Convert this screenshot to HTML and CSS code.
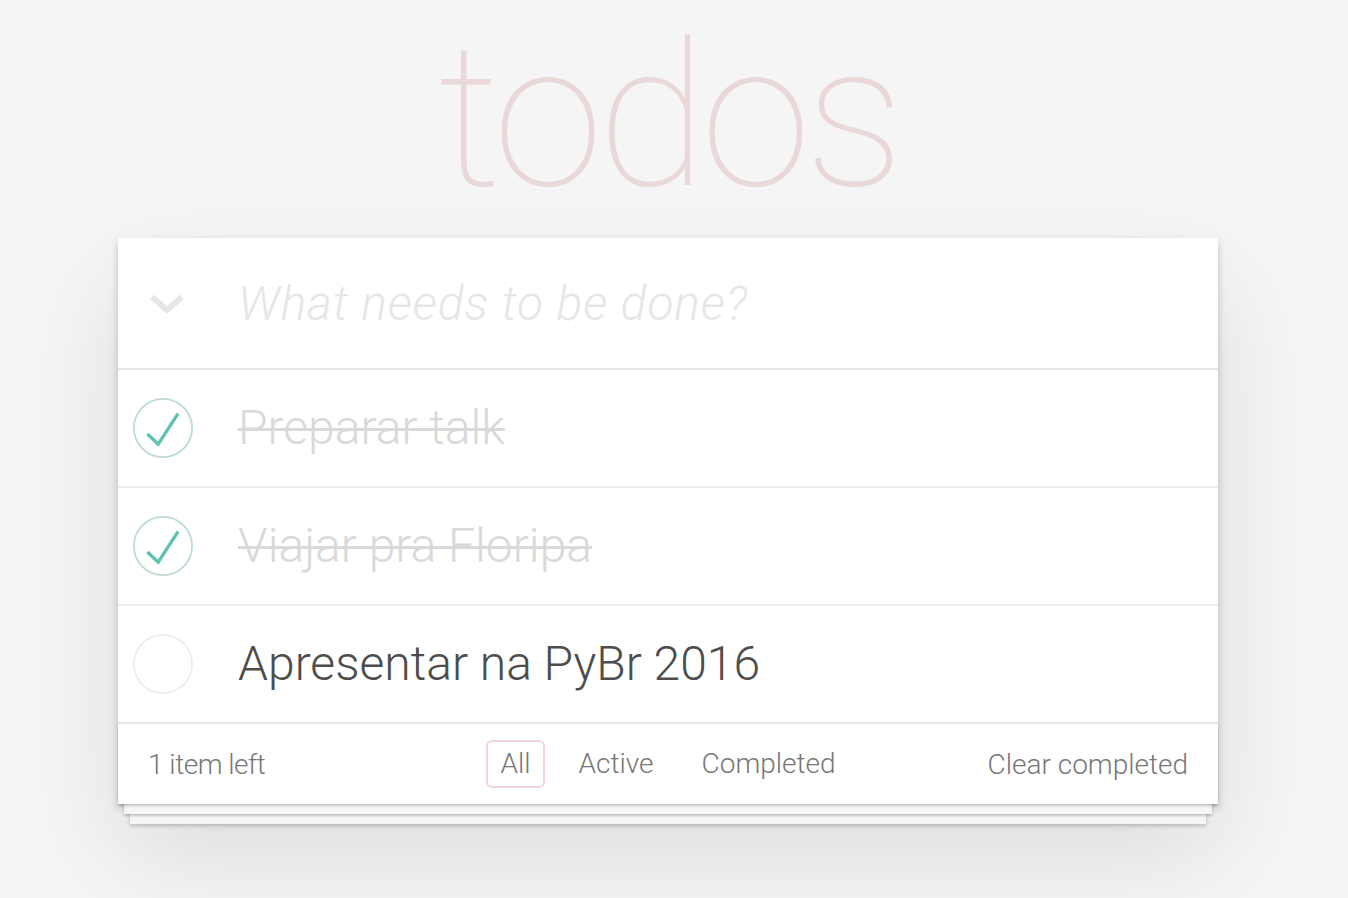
FILE: index.html
```html
<!DOCTYPE html>
<html lang="en">
<head>
<meta charset="utf-8">
<title>todos</title>
<link rel="stylesheet" href="styles.css">
</head>
<body>
<section class="todoapp">
  <h1 class="title">todos</h1>
  <div class="card">
    <header class="header">
      <span class="toggle-all">
        <svg width="34" height="22" viewBox="0 0 34 22"><polyline points="2,3 17,16 32,3" fill="none" stroke="#e6e6e6" stroke-width="6"/></svg>
      </span>
      <input class="new-todo" placeholder="What needs to be done?">
    </header>
    <ul class="todo-list">
      <li class="todo done">
        <span class="check">
          <svg width="60" height="60" viewBox="-50 -50 100 100"><circle r="48.5" fill="none" stroke="#bddad5" stroke-width="3"/><path d="M25 -24 L-8 27 L-26 10" fill="none" stroke="#5dc2af" stroke-width="5.5"/></svg>
        </span>
        <label class="label">Preparar talk</label>
      </li>
      <li class="todo done">
        <span class="check">
          <svg width="60" height="60" viewBox="-50 -50 100 100"><circle r="48.5" fill="none" stroke="#bddad5" stroke-width="3"/><path d="M25 -24 L-8 27 L-26 10" fill="none" stroke="#5dc2af" stroke-width="5.5"/></svg>
        </span>
        <label class="label">Viajar pra Floripa</label>
      </li>
      <li class="todo">
        <span class="check">
          <svg width="60" height="60" viewBox="-50 -50 100 100"><circle r="48.5" fill="none" stroke="#ededed" stroke-width="3"/></svg>
        </span>
        <label class="label">Apresentar na PyBr 2016</label>
      </li>
    </ul>
    <footer class="footer">
      <span class="count">1 item left</span>
      <ul class="filters">
        <li><a class="filter selected">All</a></li>
        <li><a class="filter">Active</a></li>
        <li><a class="filter">Completed</a></li>
      </ul>
      <span class="clear">Clear completed</span>
    </footer>
  </div>
</section>
</body>
</html>
```
FILE: styles.css
```css
html, body {
  margin: 0;
  padding: 0;
}
body {
  background: #f5f5f5;
  font-family: Roboto, "Liberation Sans", sans-serif;
  font-weight: 300;
  color: #4d4d4d;
  min-height: 898px;
  padding-right: 12px;
}
.todoapp {
  width: 1100px;
  margin: 0 auto;
}
.title {
  margin: 0;
  height: 238px;
  box-sizing: border-box;
  padding-top: 17px;
  font-size: 200px;
  line-height: 200px;
  font-weight: 100;
  letter-spacing: -6px;
  text-align: center;
  color: rgba(175, 47, 47, 0.15);
}
.card {
  background: #fff;
  position: relative;
  box-shadow: 0 4px 8px 0 rgba(0, 0, 0, 0.2), 0 50px 100px 0 rgba(0, 0, 0, 0.1);
}
.header {
  display: flex;
  align-items: center;
  height: 130px;
  border-bottom: 2px solid #e6e6e6;
}
.toggle-all {
  width: 120px;
  flex: none;
  display: flex;
  justify-content: flex-start;
  padding-left: 32px;
  box-sizing: border-box;
  margin-top: 4px;
}
.new-todo {
  flex: 1;
  border: none;
  outline: none;
  background: transparent;
  padding: 0;
  margin: 0;
  font-family: Roboto, "Liberation Sans", sans-serif;
  font-size: 48px;
  font-style: italic;
  font-weight: 300;
  letter-spacing: 0.9px;
  color: #4d4d4d;
}
.new-todo::placeholder {
  color: #e6e6e6;
  font-style: italic;
  font-weight: 300;
}
.todo-list {
  list-style: none;
  margin: 0;
  padding: 0;
}
.todo {
  display: flex;
  align-items: center;
  height: 116px;
  border-bottom: 2px solid #ededed;
}
.todo:last-child {
  border-bottom: none;
}
.check {
  width: 120px;
  flex: none;
  padding-left: 15px;
  box-sizing: border-box;
  display: flex;
  align-items: center;
}
.label {
  font-size: 48px;
  line-height: 1.2;
  color: #4d4d4d;
}
.done .label {
  color: #d9d9d9;
  text-decoration: line-through;
  text-decoration-thickness: 3px;
}
.footer {
  position: relative;
  height: 80px;
  border-top: 2px solid #e6e6e6;
  padding: 0 30px;
  display: grid;
  grid-template-columns: 1fr auto 1fr;
  align-items: center;
  font-size: 28px;
  color: #777;
}
.footer::before {
  content: '';
  position: absolute;
  left: 0;
  right: 0;
  bottom: 0;
  height: 80px;
  pointer-events: none;
  box-shadow: 0 2px 2px rgba(0, 0, 0, 0.2),
    0 16px 0 -6px #f6f6f6,
    0 18px 2px -6px rgba(0, 0, 0, 0.2),
    0 32px 0 -12px #f6f6f6,
    0 34px 4px -12px rgba(0, 0, 0, 0.2);
}
.count {
  justify-self: start;
  letter-spacing: -0.5px;
}
.filters {
  list-style: none;
  margin: 0;
  padding: 0;
  display: flex;
  gap: 8px;
}
.filter {
  display: block;
  margin: 0 6px;
  padding: 6px 12px;
  line-height: 32px;
  border: 2px solid transparent;
  border-radius: 6px;
  color: #777;
}
.filter.selected {
  border-color: rgba(175, 47, 47, 0.2);
}
.clear {
  justify-self: end;
}
```
